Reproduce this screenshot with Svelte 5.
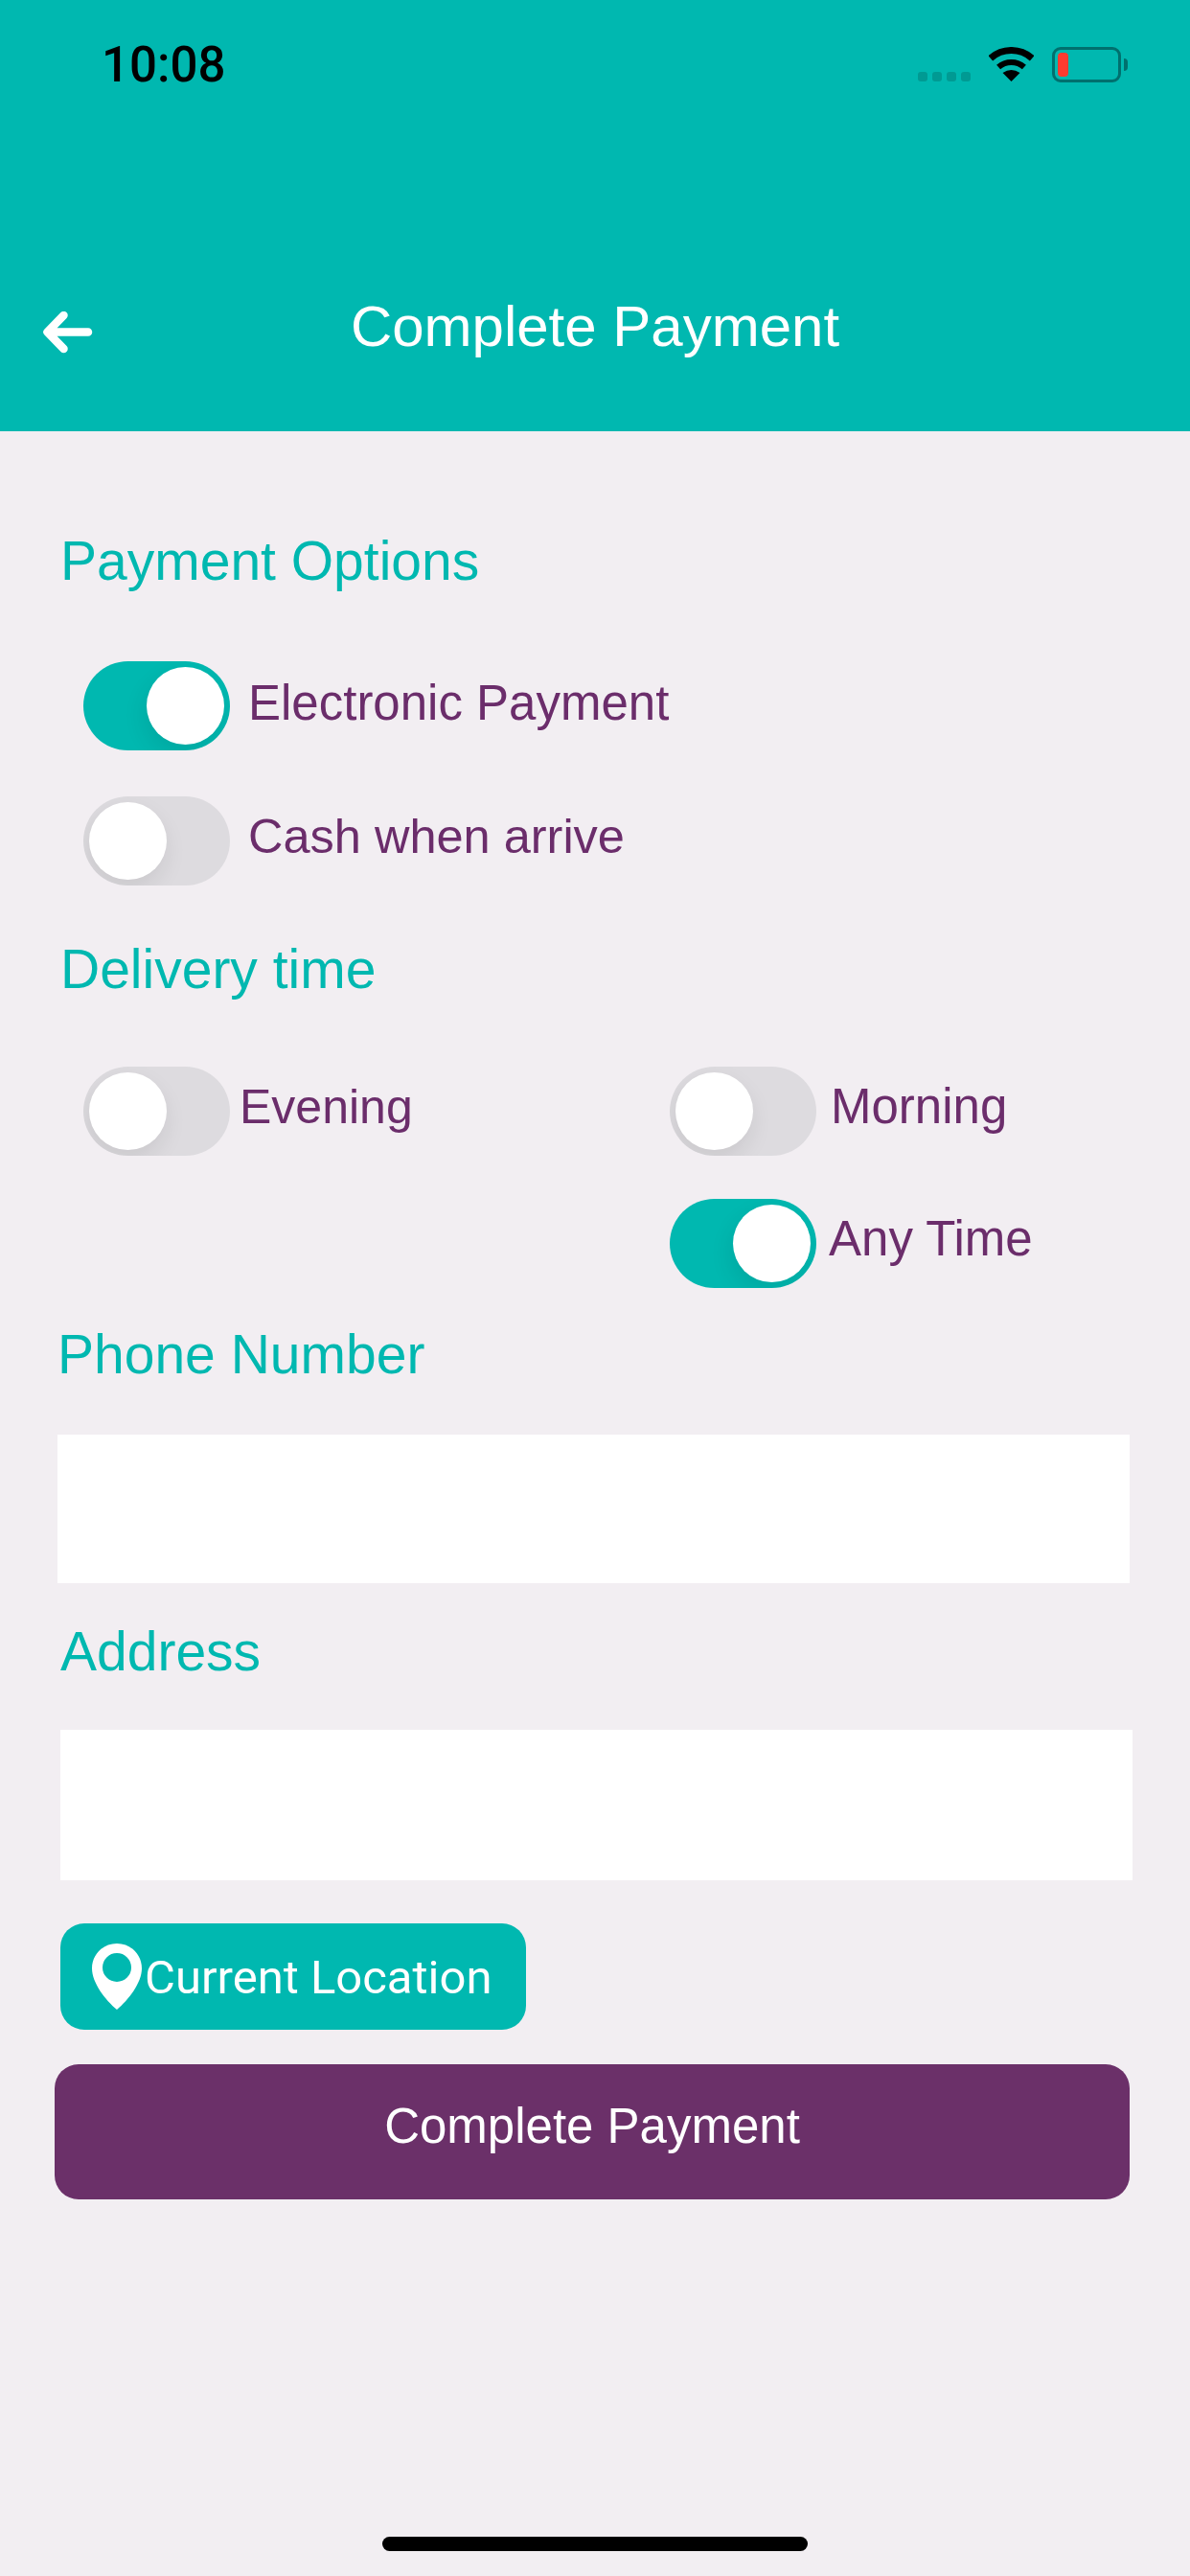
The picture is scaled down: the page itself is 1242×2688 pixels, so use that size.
<script>
  const payment = [
    { label: 'Electronic Payment', on: true, cls: 'l-electronic' },
    { label: 'Cash when arrive', on: false, cls: 'l-cash' }
  ];
</script>

<div class="screen">
  <header class="header">
    <div class="status">
      <span class="time">10:08</span>
      <div class="status-icons">
        <div class="dots"><i></i><i></i><i></i><i></i></div>
        <svg class="wifi" width="47" height="36" viewBox="0 0 47 36">
          <path d="M1.8 11.8A32.5 32.5 0 0 1 45.2 11.8" fill="none" stroke="#000" stroke-width="7" />
          <path d="M10.1 21.1A20 20 0 0 1 36.9 21.1" fill="none" stroke="#000" stroke-width="6" />
          <path d="M23.5 36L14.5 27Q23.5 21 32.5 27Z" fill="#000" />
        </svg>
        <div class="battery"><div class="cell"></div></div>
        <div class="nub"></div>
      </div>
    </div>
    <div class="nav">
      <svg class="back" width="52" height="44" viewBox="0 0 52 44">
        <path d="M47 21.5H7M21.5 4L4.5 21.5L21.5 39" fill="none" stroke="#fff" stroke-width="8.5" stroke-linecap="round" stroke-linejoin="round" />
      </svg>
      <h1>Complete Payment</h1>
    </div>
  </header>

  <main class="content">
    <h2 class="heading h-payment">Payment Options</h2>
    <div class="options">
      {#each payment as p}
        <div class="opt {p.cls}">
          <div class="toggle" class:on={p.on}><div class="knob"></div></div>
          <span>{p.label}</span>
        </div>
      {/each}
    </div>

    <h2 class="heading h-delivery">Delivery time</h2>
    <div class="times">
      <div class="opt l-evening">
        <div class="toggle"><div class="knob"></div></div>
        <span>Evening</span>
      </div>
      <div class="opt l-morning">
        <div class="toggle"><div class="knob"></div></div>
        <span>Morning</span>
      </div>
      <div class="opt l-any col2">
        <div class="toggle on"><div class="knob"></div></div>
        <span>Any Time</span>
      </div>
    </div>

    <h2 class="heading h-phone">Phone Number</h2>
    <input class="field f-phone" type="text" aria-label="Phone Number" />

    <h2 class="heading h-address">Address</h2>
    <input class="field f-address" type="text" aria-label="Address" />

    <button class="loc" type="button">
      <svg width="52" height="69" viewBox="0 0 52 69">
        <path fill-rule="evenodd" d="M26 0C11.6 0 0 11.4 0 26C0 41 14 59 26 69C38 59 52 41 52 26C52 11.4 40.4 0 26 0ZM26 10A15 15 0 1 1 26 40A15 15 0 1 1 26 10Z" fill="#fff" />
      </svg>
      <span>Current Location</span>
    </button>

    <button class="submit" type="button">Complete Payment</button>
  </main>

  <div class="home"></div>
</div>

<style>
  :global(body) {
    margin: 0;
    background: #f2eef2;
  }
  .screen {
    width: 1242px;
    height: 2688px;
    display: flex;
    flex-direction: column;
    overflow: hidden;
    background: #f2eef2;
    font-family: "Liberation Sans", Arial, sans-serif;
  }
  .header {
    height: 450px;
    background: #00b8b0;
    display: flex;
    flex-direction: column;
  }
  .status {
    height: 49px;
    margin-top: 49px;
    padding: 0 65px 0 106px;
    display: flex;
    align-items: flex-start;
    justify-content: space-between;
  }
  .time {
    font-family: Roboto, sans-serif;
    font-size: 51px;
    font-weight: 500;
    line-height: 37px;
    color: #000;
  }
  .status-icons {
    display: flex;
    align-items: flex-start;
  }
  .dots {
    display: flex;
    gap: 5px;
    margin-top: 26px;
    margin-right: 19px;
  }
  .dots i {
    width: 10px;
    height: 10px;
    border-radius: 3px;
    background: #009a93;
  }
  .wifi {
    margin-right: 19px;
    display: block;
  }
  .battery {
    width: 72px;
    height: 37px;
    box-sizing: border-box;
    border: 3.5px solid #00706e;
    border-radius: 9px;
    padding: 3px;
  }
  .cell {
    width: 11px;
    height: 100%;
    border-radius: 4px;
    background: #ff3b30;
  }
  .nub {
    width: 4px;
    height: 13px;
    margin: 12px 0 0 3px;
    border-radius: 0 4px 4px 0;
    background: #00706e;
  }
  .nav {
    margin-top: 213px;
    height: 60px;
    display: flex;
    align-items: center;
    position: relative;
    justify-content: center;
  }
  .back {
    position: absolute;
    left: 45px;
    top: 14px;
  }
  h1 {
    margin: 0;
    font-size: 60px;
    font-weight: 400;
    color: #fff;
    line-height: 60px;
  }
  .content {
    flex: 1;
    display: flex;
    flex-direction: column;
    align-items: flex-start;
  }
  .heading {
    margin: 0;
    font-size: 57px;
    font-weight: 400;
    line-height: 70px;
    color: #00b8b0;
  }
  .h-payment {
    margin: 100px 0 0 63px;
  }
  .options {
    margin: 70px 0 0 87px;
    display: flex;
    flex-direction: column;
    gap: 48px;
  }
  .opt {
    display: flex;
    align-items: center;
    height: 93px;
  }
  .opt span {
    font-size: 51px;
    line-height: 60px;
    color: #6b2d6b;
    margin-top: -6px;
  }
  .l-electronic { gap: 19px; }
  .l-cash { gap: 19px; }
  .l-cash span { font-size: 50.5px; margin-top: -9px; }
  .l-evening { gap: 10px; }
  .l-evening span { font-size: 50px; margin-top: -9px; }
  .l-morning { gap: 15px; }
  .l-morning span { margin-top: -9px; }
  .l-any { gap: 13px; }
  .l-any span { margin-top: -9px; }
  .toggle {
    width: 153px;
    height: 93px;
    box-sizing: border-box;
    padding: 6px;
    border-radius: 47px;
    background: #dddbdf;
    display: flex;
    justify-content: flex-start;
    flex-shrink: 0;
    overflow: hidden;
  }
  .toggle.on {
    background: #00b8b0;
    justify-content: flex-end;
  }
  .knob {
    width: 81px;
    height: 81px;
    border-radius: 50%;
    background: #fff;
    box-shadow: -2px 10px 24px rgba(0, 0, 0, 0.09);
  }
  .h-delivery {
    margin: 52px 0 0 63px;
  }
  .times {
    margin: 67px 0 0 87px;
    display: grid;
    grid-template-columns: 612px auto;
    row-gap: 45px;
  }
  .col2 {
    grid-column: 2;
  }
  .h-phone {
    margin: 34px 0 0 60px;
  }
  .field {
    display: block;
    width: 1119px;
    height: 155px;
    box-sizing: border-box;
    border: 0;
    padding: 0;
    background: #fff;
    outline: none;
  }
  .f-phone {
    margin: 49px 0 0 60px;
  }
  .h-address {
    margin: 36px 0 0 63px;
  }
  .f-address {
    margin: 47px 0 0 63px;
    height: 157px;
  }
  .loc {
    margin: 45px 0 0 63px;
    width: 486px;
    height: 111px;
    box-sizing: border-box;
    border: 0;
    border-radius: 25px;
    background: #00b8b0;
    color: #fff;
    padding: 0 0 0 33px;
    display: flex;
    align-items: center;
    font-family: Roboto, sans-serif;
    font-weight: 400;
    font-size: 49px;
  }
  .loc span {
    margin-top: 2px;
    line-height: 60px;
    margin-left: 3px;
  }
  .loc svg {
    flex-shrink: 0;
  }
  .submit {
    margin: 36px 0 0 57px;
    width: 1122px;
    height: 141px;
    border: 0;
    border-radius: 25px;
    background: #6b3069;
    color: #fff;
    font-family: "Liberation Sans", Arial, sans-serif;
    font-size: 51px;
    padding: 0 0 12px;
  }
  .home {
    width: 444px;
    height: 15px;
    margin: 0 auto 26px;
    border-radius: 8px;
    background: #000;
  }
</style>
